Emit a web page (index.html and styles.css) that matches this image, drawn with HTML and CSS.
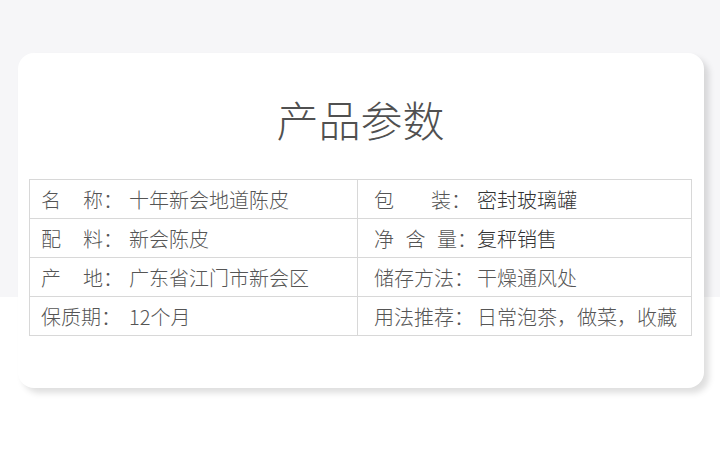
FILE: index.html
```html
<!DOCTYPE html>
<html lang="zh-CN">
<head>
<meta charset="utf-8">
<title>产品参数</title>
<link rel="stylesheet" href="styles.css">
</head>
<body>
<div class="page">
  <div class="card">
    <h1 class="title">产品参数</h1>
    <div class="table">
      <div class="cell"><span class="label l4">名<span class="sp2"></span>称：</span><span class="value">十年新会地道陈皮</span></div>
      <div class="cell right"><span class="label l5">包<span class="sp3"></span>装：</span><span class="value dark">密封玻璃罐</span></div>
      <div class="cell"><span class="label l4">配<span class="sp2"></span>料：</span><span class="value">新会陈皮</span></div>
      <div class="cell right"><span class="label l5">净<span class="sp1"></span>含<span class="sp1"></span>量：</span><span class="value dark">复秤销售</span></div>
      <div class="cell"><span class="label l4">产<span class="sp2"></span>地：</span><span class="value">广东省江门市新会区</span></div>
      <div class="cell right"><span class="label l5">储存方法：</span><span class="value">干燥通风处</span></div>
      <div class="cell last"><span class="label l4">保质期：</span><span class="value">12个月</span></div>
      <div class="cell right last"><span class="label l5">用法推荐：</span><span class="value">日常泡茶，做菜，收藏</span></div>
    </div>
  </div>
</div>
</body>
</html>
```
FILE: styles.css
```css
html, body {
  margin: 0;
  padding: 0;
}
body {
  width: 720px;
  height: 470px;
  overflow: hidden;
  background: linear-gradient(to bottom, #f6f6f8 0, #f6f6f8 297px, #ffffff 297px);
  font-family: "Noto Sans CJK SC", "Noto Sans", sans-serif;
}
.page {
  padding: 53px 16px 0 18px;
}
.card {
  width: 686px;
  height: 335px;
  box-sizing: border-box;
  background: #ffffff;
  border-radius: 16px;
  box-shadow: 5px 5px 6px rgba(0, 0, 0, 0.13);
  padding: 0 12px 0 11px;
  display: flex;
  flex-direction: column;
}
.title {
  margin: 0;
  height: 126px;
  box-sizing: border-box;
  padding-top: 38px;
  text-align: center;
  font-size: 42px;
  line-height: 56px;
  font-weight: 300;
  color: #505050;
  letter-spacing: 0;
}
.table {
  display: grid;
  grid-template-columns: 328px 334px;
  grid-auto-rows: 39px;
  border-top: 1px solid #d8d8d8;
  border-left: 1px solid #d8d8d8;
}
.cell {
  display: flex;
  align-items: center;
  border-right: 1px solid #d8d8d8;
  border-bottom: 1px solid #d8d8d8;
  padding-left: 11px;
  font-size: 20px;
  font-weight: 300;
  color: #555555;
  white-space: nowrap;
}
.cell.right {
  padding-left: 16px;
}
.label {
  display: inline-flex;
  flex: none;
}
.l4 { width: 88px; }
.l5 { width: 103px; }
.sp1 { display: inline-block; width: 12px; }
.sp2 { display: inline-block; width: 22px; }
.sp3 { display: inline-block; width: 37px; }
.value {
  color: #555555;
}
.value.dark {
  color: #333333;
}
```
